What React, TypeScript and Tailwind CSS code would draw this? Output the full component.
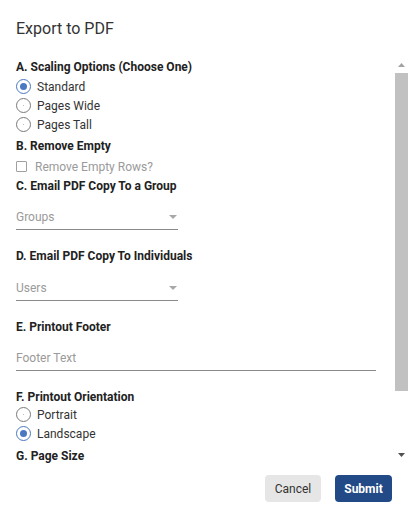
import React from 'react'

const font = { fontFamily: 'Roboto, "Liberation Sans", sans-serif' }

function Heading({ children, className = '' }: { children: React.ReactNode; className?: string }) {
  return (
    <div className={`flex h-[20px] items-center text-[12px] font-bold text-[#222] ${className}`}>
      {children}
    </div>
  )
}

function Radio({ checked, label }: { checked?: boolean; label: string }) {
  return (
    <div className="flex h-[19px] items-center">
      <span
        className={`flex h-[15px] w-[15px] items-center justify-center rounded-full border ${
          checked ? 'border-[#4a78c2]' : 'border-[#7a7a7a]'
        }`}
      >
        {checked ? (
          <span className="h-[7px] w-[7px] rounded-full bg-[#4a78c2]" />
        ) : (
          <span className="h-[1px] w-[1px] rounded-full bg-[#aaa]" />
        )}
      </span>
      <span className="ml-[6px] text-[12px] text-[#333]">{label}</span>
    </div>
  )
}

function SelectField({ placeholder, className = '' }: { placeholder: string; className?: string }) {
  return (
    <div className={`flex h-[25px] w-[162px] items-center justify-between border-b border-[#8a8a8a] ${className}`}>
      <span className="text-[12px] text-[#9a9a9a]">{placeholder}</span>
      <svg width="8" height="4" viewBox="0 0 8 4" className="mr-[1px]">
        <path d="M0 0 L8 0 L4 4 Z" fill="#a8a8a8" />
      </svg>
    </div>
  )
}

export default function App() {
  return (
    <div className="flex h-[506px] w-[410px] flex-col bg-white" style={font}>
      <div className="pl-4 pt-[17px] text-[16px] leading-6 text-[#333]">Export to PDF</div>

      {/* scroll area */}
      <div className="mt-[16px] flex h-[408px]">
        <div className="flex-1 overflow-hidden pl-4">
          <Heading>A. Scaling Options (Choose One)</Heading>
          <Radio checked label="Standard" />
          <Radio label="Pages Wide" />
          <Radio label="Pages Tall" />

          <Heading className="mt-[2px]">B. Remove Empty</Heading>
          <div className="mt-[1px] flex h-[19px] items-center">
            <span className="h-[11px] w-[11px] rounded-[1px] border border-[#a0a0a0]" />
            <span className="ml-[8px] text-[12px] text-[#9a9a9a]">Remove Empty Rows?</span>
          </div>

          <Heading>C. Email PDF Copy To a Group</Heading>
          <SelectField placeholder="Groups" className="mt-[9px]" />

          <Heading className="mt-[16px]">D. Email PDF Copy To Individuals</Heading>
          <SelectField placeholder="Users" className="mt-[10px]" />

          <Heading className="mt-[16px]">E. Printout Footer</Heading>
          <div className="mt-[9px] flex h-[25px] w-[360px] items-center border-b border-[#8a8a8a]">
            <span className="text-[12px] text-[#9a9a9a]">Footer Text</span>
          </div>

          <Heading className="mt-[16px]">F. Printout Orientation</Heading>
          <div className="-mt-[2px]">
            <Radio label="Portrait" />
            <Radio checked label="Landscape" />
          </div>

          <Heading className="mt-[3px]">G. Page Size</Heading>
          <div className="h-[40px]" />
        </div>

        {/* scrollbar */}
        <div className="mr-[1px] flex w-[15px] flex-col pb-[3px]">
          <div className="flex h-[16px] items-center justify-center">
            <svg width="7" height="4" viewBox="0 0 7 4">
              <path d="M0 4 L7 4 L3.5 0 Z" fill="#a3a3a3" />
            </svg>
          </div>
          <div className="mx-auto h-[318px] w-[13px] bg-[#c1c1c1]" />
          <div className="flex-1" />
          <div className="flex h-[15px] items-center justify-center">
            <svg width="7" height="4" viewBox="0 0 7 4">
              <path d="M0 0 L7 0 L3.5 4 Z" fill="#505050" />
            </svg>
          </div>
        </div>
      </div>

      {/* footer buttons */}
      <div className="mt-[10px] flex justify-end gap-[14px] pr-[18px]">
        <button className="h-[27px] w-[56px] rounded-[4px] bg-[#e6e6e6] text-[12px] text-[#333]">Cancel</button>
        <button className="h-[27px] w-[57px] rounded-[4px] bg-[#214a86] text-[12px] font-bold text-white">Submit</button>
      </div>
    </div>
  )
}
